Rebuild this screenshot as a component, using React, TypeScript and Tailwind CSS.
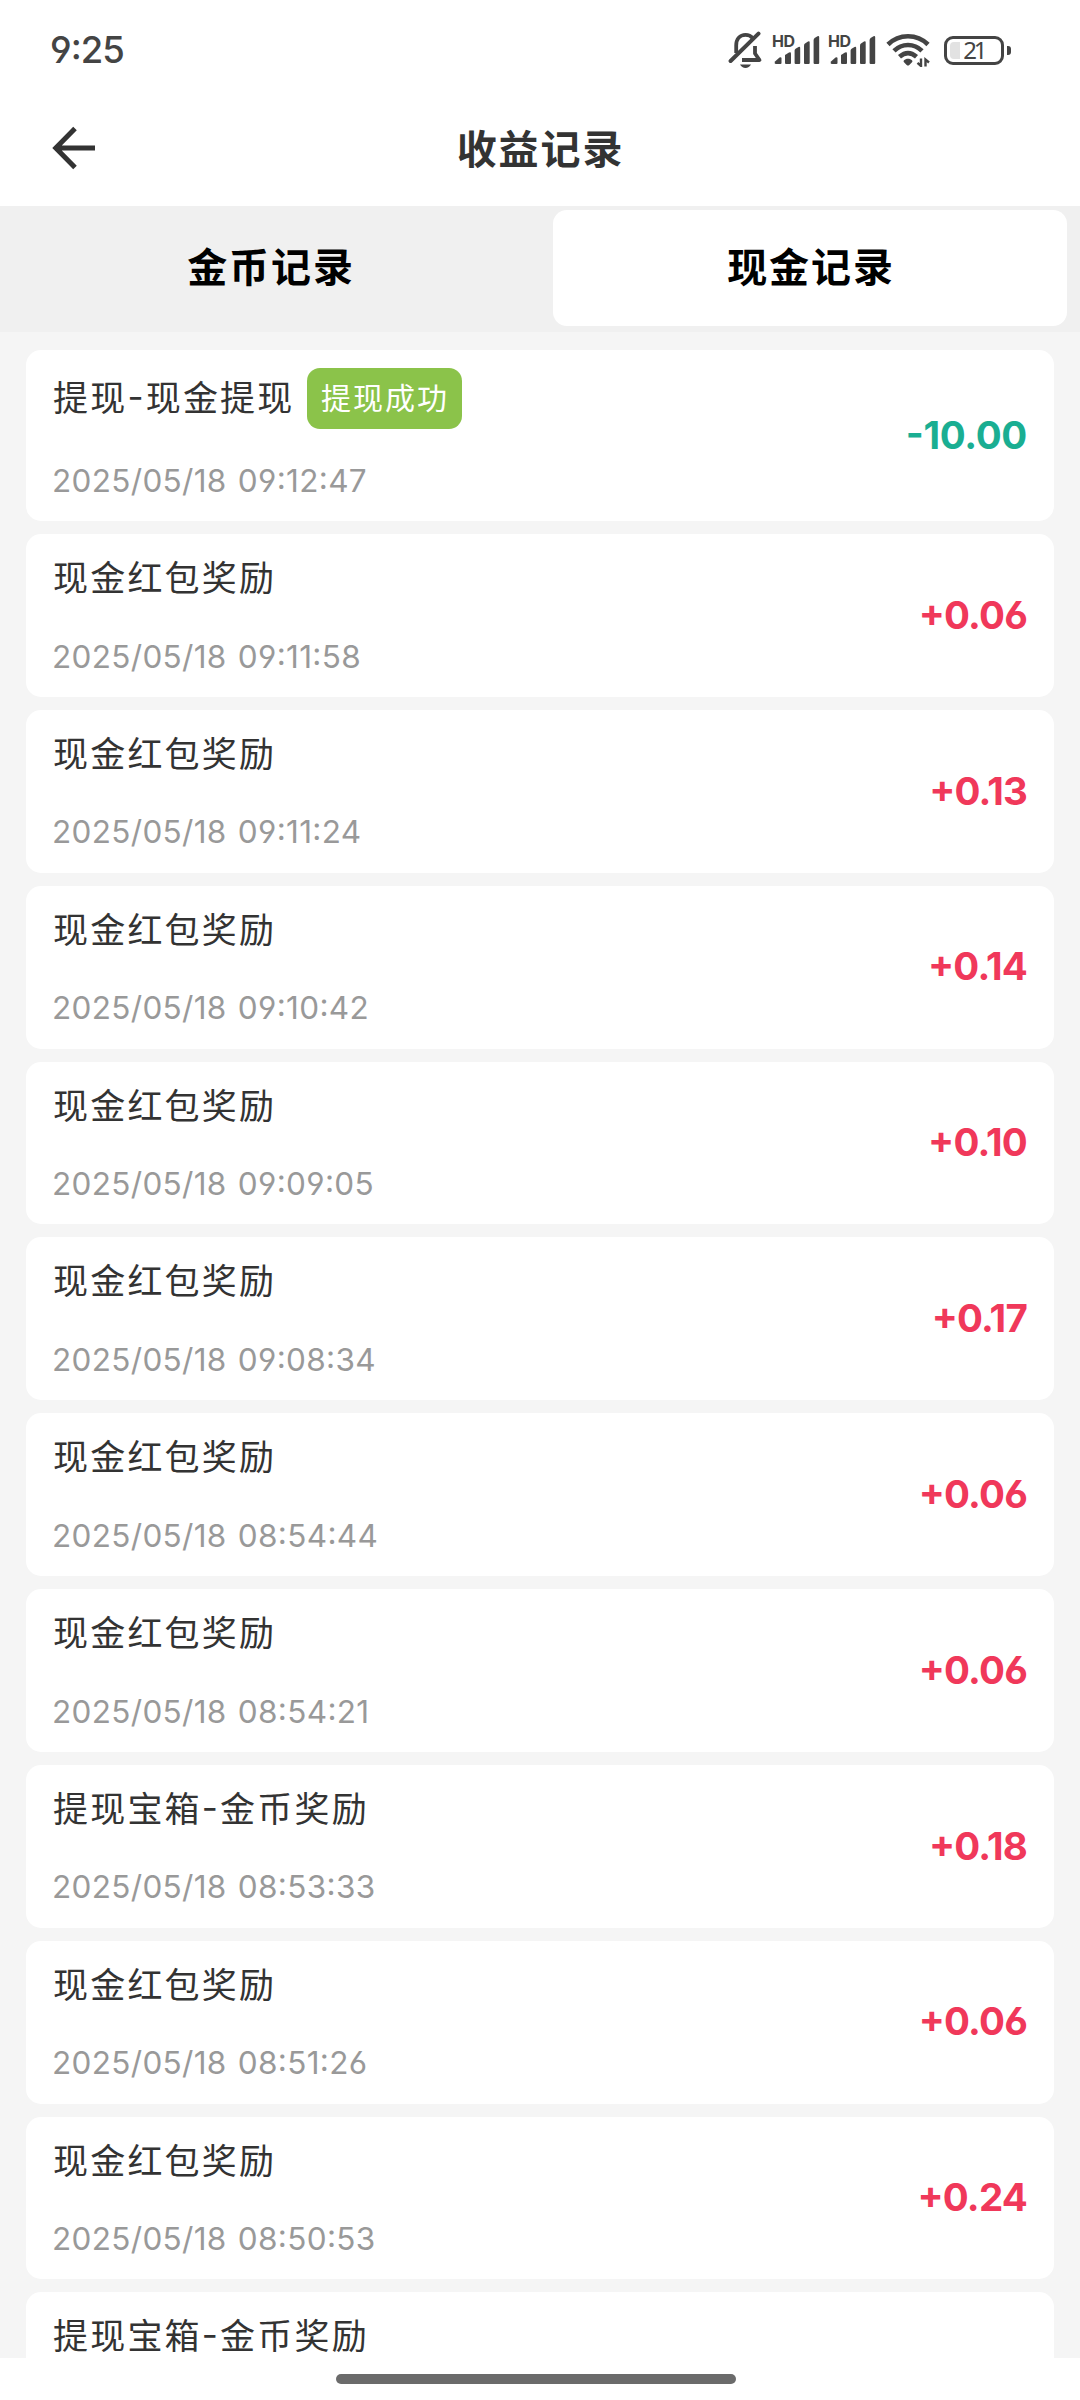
import type { ReactNode } from "react";

type RecordItem = {
    id: number;
    title: string;
    time?: string;
    amount?: string;
    status?: string;
};

const RECORDS: RecordItem[] = [
    { id: 1, title: "提现-现金提现", time: "2025/05/18 09:12:47", amount: "-10.00", status: "提现成功" },
    { id: 2, title: "现金红包奖励", time: "2025/05/18 09:11:58", amount: "+0.06" },
    { id: 3, title: "现金红包奖励", time: "2025/05/18 09:11:24", amount: "+0.13" },
    { id: 4, title: "现金红包奖励", time: "2025/05/18 09:10:42", amount: "+0.14" },
    { id: 5, title: "现金红包奖励", time: "2025/05/18 09:09:05", amount: "+0.10" },
    { id: 6, title: "现金红包奖励", time: "2025/05/18 09:08:34", amount: "+0.17" },
    { id: 7, title: "现金红包奖励", time: "2025/05/18 08:54:44", amount: "+0.06" },
    { id: 8, title: "现金红包奖励", time: "2025/05/18 08:54:21", amount: "+0.06" },
    { id: 9, title: "提现宝箱-金币奖励", time: "2025/05/18 08:53:33", amount: "+0.18" },
    { id: 10, title: "现金红包奖励", time: "2025/05/18 08:51:26", amount: "+0.06" },
    { id: 11, title: "现金红包奖励", time: "2025/05/18 08:50:53", amount: "+0.24" },
    { id: 12, title: "提现宝箱-金币奖励" },
];

function MutedBell() {
    return (
        <svg width="36" height="38" viewBox="0 0 36 38" fill="none" stroke="#444" strokeWidth="3.8">
            <path d="M8.2 22V14.5C8.2 8 12 3.8 17.5 3.8C20.5 3.8 23 5 24.6 7" />
            <path d="M27 15V22.5L31.5 29H14" strokeLinejoin="round" />
            <path d="M2.6 30L30.5 2.6" strokeLinecap="round" strokeWidth="4" />
            <path d="M12 33.5H23C21.8 35.8 19.8 37 17.5 37C15.2 37 13.2 35.8 12 33.5Z" fill="#444" stroke="none" />
        </svg>
    );
}

function Signal() {
    return (
        <div className="relative h-[30px] w-[48px]">
            <span className="absolute -left-px top-0 text-[16px] font-bold leading-[12px] tracking-[-0.5px]">HD</span>
            <svg className="absolute inset-0" width="48" height="30" viewBox="0 0 48 30" fill="#444">
                <path d="M2 26.5L6.5 22.5Q8.5 21.5 8.5 23.5V28Q8.5 29 7.5 29H3Q1 29 2 26.5Z" />
                <path d="M12 20L16 17.5Q18 16.5 18 18.5V28Q18 29 17 29H13Q12 29 12 28Z" />
                <path d="M21.6 15.5Q21.6 14.5 22.6 13.8L25.5 12Q27.2 11.2 27.2 13V28Q27.2 29 26.2 29H22.6Q21.6 29 21.6 28Z" />
                <path d="M31 10.5Q31 9.2 32 8.5L35 6.5Q36.7 5.7 36.7 7.5V28Q36.7 29 35.7 29H32Q31 29 31 28Z" />
                <path d="M40.6 5Q40.6 3.8 41.6 3L44.5 1.2Q46.2 0.5 46.2 2.5V28Q46.2 29 45.2 29H41.6Q40.6 29 40.6 28Z" />
            </svg>
        </div>
    );
}

function Wifi() {
    return (
        <svg width="44" height="34" viewBox="0 0 44 34" fill="none" stroke="#444" strokeWidth="4.6">
            <path d="M2 11.5C13 0.5 31 0.5 42 11.5" />
            <path d="M8 17.8C16 10 28 10 36 17.8" />
            <path d="M13.5 23.8C19 19 25 19 30.5 23.8" />
            <path d="M17.8 27.5C20 25 24 25 26.2 27.5Q26.8 28.5 26 29.3L23.3 32Q22 33 20.7 32L18 29.3Q17.2 28.5 17.8 27.5Z" fill="#444" stroke="none" />
            <path d="M35 25.5V33L31.5 29.8M39.5 33.5V26.5L43 29.5" strokeWidth="2.4" />
        </svg>
    );
}

function Battery() {
    return (
        <div className="flex items-center gap-[3px]">
            <div className="relative flex h-[29px] w-[60px] items-center justify-center rounded-[9px] border-[3px] border-[#444]">
                <div className="absolute bottom-[3px] left-[3px] top-[3px] w-[10px] rounded-l-[4px] bg-[#e2e2e2]" />
                <span className="relative font-['Noto_Sans'] text-[24px] leading-none tracking-[-1.5px]">21</span>
            </div>
            <div className="h-[9px] w-[4px] rounded-r-[3px] bg-[#444]" />
        </div>
    );
}

function Tab({ active, children }: { active?: boolean; children: ReactNode }) {
    return (
        <div className={active ? "w-1/2 px-[13px] pb-[6px] pt-[4px]" : "w-1/2 pb-[6px] pt-[4px]"}>
            <button
                type="button"
                className={active ? "h-full w-full rounded-[14px] bg-white pl-[2px]" : "h-full w-full pl-[2px]"}
            >
                {children}
            </button>
        </div>
    );
}

function RecordCard({ item }: { item: RecordItem }) {
    const isExpense = item.amount?.startsWith("-");

    return (
        <li className="flex shrink-0 items-center justify-between rounded-[15px] bg-white px-[27px]">
            <div className={item.status ? "h-[171px] pt-[18px]" : "h-[162.85px] pt-[15px]"}>
                <div className={item.status ? "flex h-[61px] items-center gap-[12px]" : "flex h-[59px] items-center"}>
                    <span className="text-[35px] leading-none tracking-[2.2px] text-[#333]">{item.title}</span>
                    {item.status && (
                        <span className="flex h-[61px] w-[155px] items-center justify-center rounded-[13px] bg-[#8bc34a] pb-[2px] pl-[2px] text-[30px] leading-none tracking-[2px] text-white">
                            {item.status}
                        </span>
                    )}
                </div>
                {item.time && (
                    <p
                        className={
                            item.status
                                ? "-ml-px mt-[32px] text-[31.5px] leading-[40px] tracking-[0.32px] text-[#999] [word-spacing:2px]"
                                : "-ml-px mt-[28.5px] text-[31.5px] leading-[40px] tracking-[0.32px] text-[#999] [word-spacing:2px]"
                        }
                    >
                        {item.time}
                    </p>
                )}
            </div>
            {item.amount && (
                <span
                    className={
                        isExpense
                            ? "pb-px text-[38.5px] font-bold leading-none tracking-[-0.3px] text-[#1aae92]"
                            : "pb-px text-[38.5px] font-bold leading-none tracking-[-0.8px] text-[#f0385a]"
                    }
                >
                    {item.amount}
                </span>
            )}
        </li>
    );
}

export default function App() {
    return (
        <div className="flex h-[2400px] w-[1080px] flex-col overflow-hidden bg-white font-['Inter','Noto_Sans_CJK_SC',sans-serif] [font-feature-settings:'cv03','cv04','case']">
            <div className="flex h-[100px] items-center justify-between pl-[50px] pr-[69px] text-[#444]">
                <span className="text-[36.5px] font-medium leading-none tracking-[-1px]">9:25</span>
                <div className="flex items-center">
                    <MutedBell />
                    <div className="ml-[9px] flex gap-[8px]">
                        <Signal />
                        <Signal />
                    </div>
                    <div className="ml-[9px]">
                        <Wifi />
                    </div>
                    <div className="ml-[14px]">
                        <Battery />
                    </div>
                </div>
            </div>

            <header className="flex h-[106px] items-center px-[52px] pb-[11px]">
                <div className="w-[60px]">
                    <svg width="44" height="44" viewBox="0 0 44 44" fill="none" stroke="#333" strokeWidth="5">
                        <path d="M23 2.5L3.8 22L23 41.5M4 22H43" />
                    </svg>
                </div>
                <h1 className="flex-1 pl-px pt-[4px] text-center text-[40px] font-bold leading-none tracking-[1.9px] text-[#333]">收益记录</h1>
                <div className="w-[60px]" />
            </header>

            <nav className="flex h-[126px] bg-[#f0f0f0] text-[40px] font-bold leading-none tracking-[1.9px] text-black">
                <Tab>金币记录</Tab>
                <Tab active>现金记录</Tab>
            </nav>

            <ul className="flex h-[2026px] flex-col gap-[13px] overflow-hidden bg-[#f5f5f5] px-[26px] pt-[18px]">
                {RECORDS.map((item) => (
                    <RecordCard key={item.id} item={item} />
                ))}
            </ul>

            <footer className="flex h-[42px] justify-center pr-[8px] pt-[16px]">
                <div className="h-[10px] w-[400px] rounded-full bg-[#6b6b6b]" />
            </footer>
        </div>
    );
}
